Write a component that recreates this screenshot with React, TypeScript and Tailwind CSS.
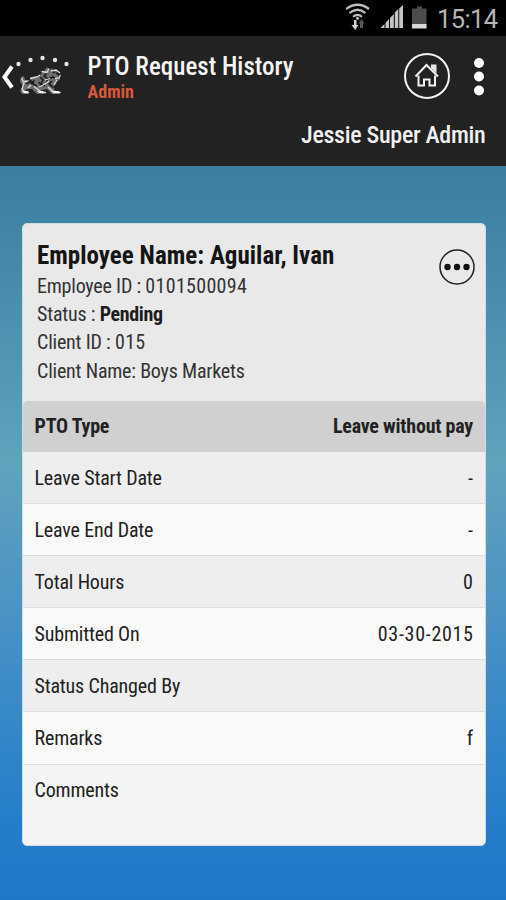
import type { ReactNode } from 'react';
import clsx from 'clsx';

type Row = { label: string; value?: string };

const details = [
  { label: 'Employee ID :', value: '0101500094', valueClass: 'tracking-[0.3px]' },
  { label: 'Status :', value: 'Pending', valueClass: 'font-bold tracking-[-0.35px] text-[#1c1c1c]' },
  { label: 'Client ID :', value: '015', valueClass: 'tracking-[0.3px]' },
  { label: 'Client Name:', value: 'Boys Markets' },
];

const rows: Row[] = [
  { label: 'Leave Start Date', value: '-' },
  { label: 'Leave End Date', value: '-' },
  { label: 'Total Hours', value: '0' },
  { label: 'Submitted On', value: '03-30-2015' },
  { label: 'Status Changed By' },
  { label: 'Remarks', value: 'f' },
];

function Condensed({ children, className }: { children: ReactNode; className?: string }) {
  return <span className={clsx('block whitespace-nowrap [font-stretch:75%]', className)}>{children}</span>;
}

function StatusBar() {
  return (
    <div className="flex h-9 items-center justify-end bg-black pr-2">
      <svg width="152" height="36" viewBox="346 0 152 36">
        <g fill="none" stroke="#bdbdbd" strokeWidth="2.200">
          <path d="M346 9q11.500-8.500 23 0" />
          <path d="M349.500 13q8-6.500 16 0" />
          <path d="M353 16.800q4.500-4 9 0" />
        </g>
        <circle cx="357.500" cy="18.200" r="1.500" fill="#bdbdbd" />
        <path d="M354 20h2.500v5h2l-3.300 5-3.700-5H354z" fill="#d0d0d0" />
        <path d="M360 28v-4.500h-1.500l3-4.500 3 4.500H363V28z" fill="#555" />
        <g fill="#c4c4c4">
          <path d="M380.500 28l4-4v4z" />
          <path d="M385.500 28v-5l3.500-4v9z" />
          <path d="M390 28V18l3.800-4v14z" />
          <path d="M394.800 28V12.500l3.500-3.500v19z" />
          <path d="M399.200 28V8.500l3.800-3.500v23z" />
        </g>
        <path d="M412 8.500h5V6.500h5v2h4.500V28H412z" fill="#4c4c4c" />
        <path d="M412 24h14.500v4.500H412z" fill="#d8d8d8" />
        <text x="437" y="28" fontSize="25.500" textLength="61" fill="#b5b5b5" fontFamily="Roboto, sans-serif">
          15:14
        </text>
      </svg>
    </div>
  );
}

function DragonLogo() {
  return (
    <svg width="72" height="42" viewBox="0 55 72 42">
      <path d="M12 66.500L4.500 77 12 87.500" fill="none" stroke="#fff" strokeWidth="4" />
      <g fill="#e4e4e4">
        <circle cx="18.500" cy="64" r="2.200" />
        <circle cx="30.500" cy="60" r="2.200" />
        <circle cx="42.500" cy="58" r="2.200" />
        <circle cx="55" cy="60" r="2.200" />
        <circle cx="66.500" cy="64" r="2.200" />
      </g>
      {/* body */}
      <path
        d="M21 77l3-1 1 4 4 0 2-3 8-1 3-3-2-2 4 0 3-4 2 3 3-2 1 3 4 0-1 3 4 3v3l-3 1-2 4-2 2 3 5h3l1 2h-8l-5-5-6 1 3 4h-7l-5-5-5 0-2 2 4 3h-7l-2-3 3-5-3-4z"
        fill="#6e6e6e"
      />
      {/* scales and gaps between the limbs */}
      <path
        d="M26 84l4-2 2 2M34 80l-1 4 4 2M40 77l3 3-2 4 4 2M47 73l-3 3 4 3 5-2 2 1M52 81l-3 3 4 3M39 82l2 4M29 79l4 4M52 71l3 2M46 83l2-4"
        fill="none"
        stroke="#1c1c1c"
        strokeWidth="1.600"
      />
      <path
        d="M21.500 78l2 4 4-1M30 78.500l7-1.500 3-2M42 71.500l5 1 2-4M51 71l5-1 4 3M60.500 75l-1.500 3-4 .5M24 83l-2 6 3 3.500h4M31 85l-3 3M34 86.500l8 6h4M48 87l6 5.500h6.500M45 80l5-1.500M39 87l6-3 4-3M57 80l-3 5"
        fill="none"
        stroke="#dcdcdc"
        strokeWidth="1.300"
      />
      <path d="M22 91h5.500l1.500 2h-5zM37 91h6l2 2h-6zM51 91h7.500l2 2H54z" fill="#f4f4f4" />
    </svg>
  );
}

function HomeIcon() {
  return (
    <svg width="48" height="48" viewBox="0 0 48 48" fill="none" stroke="#f2f2f2">
      <circle cx="24" cy="24" r="22" strokeWidth="2" />
      <path d="M12.500 24.500L23.500 13l11.500 11.500" strokeWidth="2" />
      <path d="M28 12.500h5.500v9l-5.500-5.500z" fill="#e6e6e6" stroke="none" />
      <path d="M15.500 23.500V33.500h5.500v-6h5.500v6h5.500v-10" strokeWidth="2" />
    </svg>
  );
}

function Header() {
  return (
    <header className="h-[130px] border-b border-[#2c2320] bg-[#222]">
      <div className="flex h-[78px] items-start">
        <div className="w-[87.5px] pt-[19px]">
          <DragonLogo />
        </div>
        <div className="flex-1 pt-4">
          <Condensed className="text-[25px] leading-[30px] font-medium text-[#f4f4f4]">PTO Request History</Condensed>
          <Condensed className="text-[18px] leading-5 font-bold text-[#d9593c]">Admin</Condensed>
        </div>
        <div className="pt-4">
          <HomeIcon />
        </div>
        <svg className="mt-5 mr-[18px] ml-[19.5px]" width="18" height="42" viewBox="0 0 18 42" fill="#fff">
          <circle cx="9" cy="7" r="5" />
          <circle cx="9" cy="20.500" r="5" />
          <circle cx="9" cy="34.500" r="5" />
        </svg>
      </div>
      <div className="flex justify-end pt-[6px] pr-[20.5px]">
        <Condensed className="text-[24px] leading-[30px] font-medium tracking-[-0.3px] text-[#f0f0f0]">
          Jessie Super Admin
        </Condensed>
      </div>
    </header>
  );
}

function MoreButton() {
  return (
    <svg width="38" height="38" viewBox="0 0 38 38" fill="#111">
      <circle cx="19" cy="19" r="17" fill="none" stroke="#222" strokeWidth="1.500" />
      <circle cx="9.500" cy="19" r="3.200" />
      <circle cx="19" cy="19" r="3.200" />
      <circle cx="28.500" cy="19" r="3.200" />
    </svg>
  );
}

export default function App() {
  return (
    <div className="h-[900px] w-[506px] overflow-hidden bg-[linear-gradient(180deg,#3b7e9e_166px,#4286a8_240px,#60a3bd_465px,#4590c6_640px,#237dca_830px,#1f79cb_900px)] font-['Roboto_Condensed',Roboto,sans-serif]">
      <StatusBar />
      <Header />
      <main className="mt-[57px] ml-[22px] h-[623px] w-[464px] overflow-hidden rounded-[5px] border border-[#cfdce2] bg-[#e9e9e9] text-[#222]">
        <section className="flex h-[177px] justify-between pt-4 pr-[9px] pl-[14px]">
          <div>
            <Condensed className="text-[25px] leading-[31px] font-bold tracking-[0.02px] text-[#151515]">
              Employee Name: Aguilar, Ivan
            </Condensed>
            <div className="pt-px">
              {details.map((d) => (
                <Condensed key={d.label} className="text-[20px] leading-[28.2px] tracking-[-0.2px] text-[#333]">
                  {d.label} <span className={d.valueClass}>{d.value}</span>
                </Condensed>
              ))}
            </div>
          </div>
          <div className="pt-2">
            <MoreButton />
          </div>
        </section>
        <div className="flex h-[51px] items-center justify-between rounded-t-[5px] bg-[#d0d0d0] pr-3 pb-px pl-[11.5px] text-[20px] font-bold tracking-[-0.22px]">
          <Condensed>PTO Type</Condensed>
          <Condensed>Leave without pay</Condensed>
        </div>
        {rows.map((row) => (
          <div
            key={row.label}
            className="flex h-[52.1px] items-center justify-between border-b border-[#dedede] pr-3 pl-[11.5px] text-[20px] odd:bg-[#eeeeee] even:bg-[#fafafa]"
          >
            <Condensed className="tracking-[-0.17px]">{row.label}</Condensed>
            <Condensed className="-mr-[0.7px] tracking-[0.7px]">{row.value}</Condensed>
          </div>
        ))}
        <div className="h-[82px] bg-[#f4f4f4] pt-[10.5px] pl-[11.5px] text-[20px] leading-[30px]">
          <Condensed className="tracking-[-0.17px]">Comments</Condensed>
        </div>
      </main>
    </div>
  );
}
